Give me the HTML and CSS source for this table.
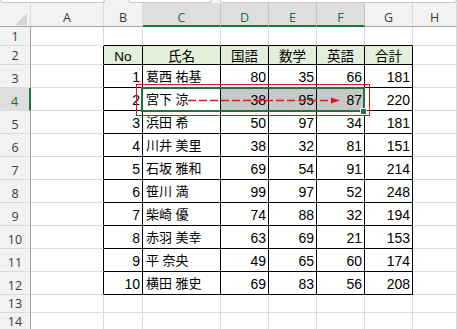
FILE: index.html
```html
<!DOCTYPE html>
<html lang="ja">
<head>
<meta charset="utf-8">
<title>Sheet</title>
<link rel="stylesheet" href="styles.css">
</head>
<body>
<div class="app">
  <div class="topstrip">
    <div class="box b1"></div>
    <div class="box b2"></div>
    <div class="box b3"></div>
  </div>
  <div class="sheet">
    <div class="row r-h">
      <div class="c corner"><svg class="tri" width="12" height="12" viewBox="0 0 12 12"><polygon points="12,0 12,12 0,12" fill="#d6d6d6"/></svg></div>
      <div class="c ch">A</div>
      <div class="c ch">B</div>
      <div class="c ch sel">C</div>
      <div class="c ch sel">D</div>
      <div class="c ch sel">E</div>
      <div class="c ch sel">F</div>
      <div class="c ch">G</div>
      <div class="c ch">H</div>
    </div>
    <div class="row r-s">
      <div class="c rh">1</div>
      <div class="c"></div>
      <div class="c tt"></div><div class="c tt"></div><div class="c tt"></div><div class="c tt"></div><div class="c tt"></div><div class="c tt"></div>
      <div class="c"></div>
    </div>
    <div class="row r-s">
      <div class="c rh">2</div>
      <div class="c tl"></div>
      <div class="c tb hd">No</div>
      <div class="c tb hd">氏名</div>
      <div class="c tb hd">国語</div>
      <div class="c tb hd">数学</div>
      <div class="c tb hd">英語</div>
      <div class="c tb hd">合計</div>
      <div class="c"></div>
    </div>
    <div class="row r-t">
      <div class="c rh">3</div><div class="c tl"></div>
      <div class="c tb num">1</div><div class="c tb jp">葛西 祐基</div>
      <div class="c tb num">80</div><div class="c tb num">35</div><div class="c tb num">66</div><div class="c tb num">181</div>
      <div class="c"></div>
    </div>
    <div class="row r-t">
      <div class="c rh sel">4</div><div class="c tl"></div>
      <div class="c tb num">2</div><div class="c tb jp">宮下 涼</div>
      <div class="c tb num hl">38</div><div class="c tb num hl">95</div><div class="c tb num hl">87</div><div class="c tb num">220</div>
      <div class="c"></div>
    </div>
    <div class="row r-t">
      <div class="c rh">5</div><div class="c tl"></div>
      <div class="c tb num">3</div><div class="c tb jp">浜田 希</div>
      <div class="c tb num">50</div><div class="c tb num">97</div><div class="c tb num">34</div><div class="c tb num">181</div>
      <div class="c"></div>
    </div>
    <div class="row r-t">
      <div class="c rh">6</div><div class="c tl"></div>
      <div class="c tb num">4</div><div class="c tb jp">川井 美里</div>
      <div class="c tb num">38</div><div class="c tb num">32</div><div class="c tb num">81</div><div class="c tb num">151</div>
      <div class="c"></div>
    </div>
    <div class="row r-t">
      <div class="c rh">7</div><div class="c tl"></div>
      <div class="c tb num">5</div><div class="c tb jp">石坂 雅和</div>
      <div class="c tb num">69</div><div class="c tb num">54</div><div class="c tb num">91</div><div class="c tb num">214</div>
      <div class="c"></div>
    </div>
    <div class="row r-t">
      <div class="c rh">8</div><div class="c tl"></div>
      <div class="c tb num">6</div><div class="c tb jp">笹川 満</div>
      <div class="c tb num">99</div><div class="c tb num">97</div><div class="c tb num">52</div><div class="c tb num">248</div>
      <div class="c"></div>
    </div>
    <div class="row r-t">
      <div class="c rh">9</div><div class="c tl"></div>
      <div class="c tb num">7</div><div class="c tb jp">柴崎 優</div>
      <div class="c tb num">74</div><div class="c tb num">88</div><div class="c tb num">32</div><div class="c tb num">194</div>
      <div class="c"></div>
    </div>
    <div class="row r-t">
      <div class="c rh">10</div><div class="c tl"></div>
      <div class="c tb num">8</div><div class="c tb jp">赤羽 美幸</div>
      <div class="c tb num">63</div><div class="c tb num">69</div><div class="c tb num">21</div><div class="c tb num">153</div>
      <div class="c"></div>
    </div>
    <div class="row r-t">
      <div class="c rh">11</div><div class="c tl"></div>
      <div class="c tb num">9</div><div class="c tb jp">平 奈央</div>
      <div class="c tb num">49</div><div class="c tb num">65</div><div class="c tb num">60</div><div class="c tb num">174</div>
      <div class="c"></div>
    </div>
    <div class="row r-t">
      <div class="c rh">12</div><div class="c tl"></div>
      <div class="c tb num">10</div><div class="c tb jp">横田 雅史</div>
      <div class="c tb num">69</div><div class="c tb num">83</div><div class="c tb num">56</div><div class="c tb num">208</div>
      <div class="c"></div>
    </div>
    <div class="row r-e">
      <div class="c rh">13</div><div class="c"></div><div class="c"></div><div class="c"></div><div class="c"></div><div class="c"></div><div class="c"></div><div class="c"></div><div class="c"></div>
    </div>
    <div class="row r-e">
      <div class="c rh">14</div><div class="c"></div><div class="c"></div><div class="c"></div><div class="c"></div><div class="c"></div><div class="c"></div><div class="c"></div><div class="c"></div>
    </div>
  </div>

  <div class="selection"></div>
  <div class="handle"></div>
  <svg class="arrow" width="457" height="329" viewBox="0 0 457 329">
    <line x1="188" y1="100.5" x2="333" y2="100.5" stroke="#e3141b" stroke-width="1.3" stroke-dasharray="8 3"/>
    <polygon points="331,97.5 340,100.5 331,103.5" fill="#e3141b"/>
  </svg>
  <div class="redbox"></div>
</div>
</body>
</html>
```
FILE: styles.css
```css
html, body {
  margin: 0;
  padding: 0;
  background: #ffffff;
}

.app {
  position: relative;
  width: 457px;
  height: 329px;
  overflow: hidden;
  background: #ffffff;
  font-family: "Liberation Sans", Arial, "Noto Sans CJK JP", sans-serif;
  color: #000;
}

.topstrip {
  height: 3px;
  display: flex;
  background: #f2f2f2;
}

.box {
  height: 3px;
  box-sizing: border-box;
  background: #ffffff;
  border: 1px solid #c9c9c9;
  border-top: none;
  border-radius: 0 0 3px 3px;
}

.b1 { width: 105px; }
.b2 { width: 84px; margin-left: 23px; }
.b3 { flex: 1; margin-left: 8px; }

.row {
  display: grid;
  grid-template-columns: 31px 73px 39px 78px 48px 48px 48px 48px 1fr;
}

.r-h { height: 24px; }
.r-s { height: 19px; }
.r-t { height: 23px; }
.r-e { height: 18px; }

.c {
  box-sizing: border-box;
  border-right: 1px solid #dadada;
  border-bottom: 1px solid #dadada;
  display: flex;
  align-items: flex-end;
  padding: 0 3px;
  font-size: 14px;
  line-height: 14px;
  white-space: nowrap;
}

.r-t .c { padding-bottom: 3px; }

.corner {
  background: #f2f2f2;
  border-bottom-color: #a6a6a6;
  justify-content: flex-end;
  padding: 0 3px 1px 0;
}

.tri { display: block; }

.ch {
  background: #f2f2f2;
  border-bottom-color: #a6a6a6;
  justify-content: center;
  font-family: "Open Sans", "Noto Sans", sans-serif;
  font-size: 12.5px;
  color: #3a3a3a;
  padding-bottom: 1px;
}

.ch.sel {
  background: #dedede;
  color: #1d6b40;
  border-bottom: 2px solid #217346;
  border-right-color: #c4c4c4;
  padding-bottom: 0;
}

.rh {
  background: #f2f2f2;
  border-right-color: #a6a6a6;
  justify-content: center;
  font-family: "Open Sans", "Noto Sans", sans-serif;
  font-size: 12.5px;
  color: #3a3a3a;
}

.row .rh { padding-bottom: 1px; }

.rh.sel {
  background: #dedede;
  color: #1d6b40;
  border-right: 2px solid #217346;
}

.tl { border-right-color: #000; }
.tt { border-bottom-color: #000; }
.tb {
  border-right-color: #000;
  border-bottom-color: #000;
}

.hd {
  background: #e2efda;
  justify-content: center;
  font-family: "Liberation Sans", "Noto Sans CJK JP", sans-serif;
  font-size: 13.5px;
}

.jp {
  font-family: "Liberation Sans", "Noto Sans CJK JP", sans-serif;
  font-size: 13px;
  padding-left: 3px;
}

.num {
  justify-content: flex-end;
  padding-right: 2px;
}

.hl { background: #c8c8c8; }

.selection {
  position: absolute;
  left: 141px;
  top: 87px;
  width: 224px;
  height: 25px;
  box-sizing: border-box;
  border: 2px solid #217346;
}

.handle {
  position: absolute;
  left: 360px;
  top: 108px;
  width: 7px;
  height: 7px;
  box-sizing: border-box;
  background: #217346;
  border: 1px solid #ffffff;
}

.arrow {
  position: absolute;
  left: 0;
  top: 0;
}

.redbox {
  position: absolute;
  left: 136px;
  top: 84px;
  width: 234px;
  height: 32px;
  box-sizing: border-box;
  border: 1px solid #e3141b;
}
```
